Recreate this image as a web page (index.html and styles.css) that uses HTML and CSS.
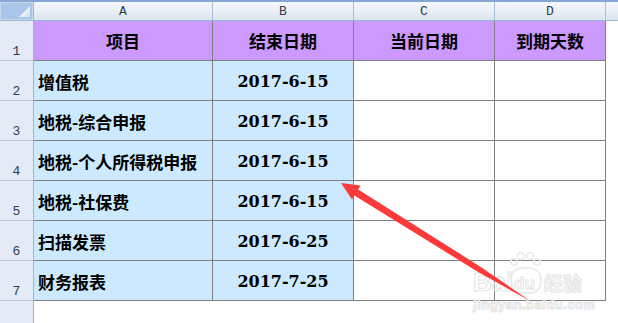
FILE: index.html
```html
<!DOCTYPE html>
<html lang="zh-CN">
<head>
<meta charset="utf-8">
<title>到期天数</title>
<link rel="stylesheet" href="styles.css">
</head>
<body>
<div class="page">
  <div class="sheet">
    <div class="corner"><span class="corner-tri"></span></div>
    <div class="colhead">A</div>
    <div class="colhead">B</div>
    <div class="colhead">C</div>
    <div class="colhead">D</div>
    <div class="colhead colhead-rest"></div>

    <div class="rowhead">1</div>
    <div class="cell title">项目</div>
    <div class="cell title">结束日期</div>
    <div class="cell title">当前日期</div>
    <div class="cell title">到期天数</div>
    <div class="cell empty"></div>

    <div class="rowhead">2</div>
    <div class="cell item">增值税</div>
    <div class="cell date">2017-6-15</div>
    <div class="cell"></div>
    <div class="cell"></div>
    <div class="cell empty"></div>

    <div class="rowhead">3</div>
    <div class="cell item">地税-综合申报</div>
    <div class="cell date">2017-6-15</div>
    <div class="cell"></div>
    <div class="cell"></div>
    <div class="cell empty"></div>

    <div class="rowhead">4</div>
    <div class="cell item">地税-个人所得税申报</div>
    <div class="cell date">2017-6-15</div>
    <div class="cell"></div>
    <div class="cell"></div>
    <div class="cell empty"></div>

    <div class="rowhead">5</div>
    <div class="cell item">地税-社保费</div>
    <div class="cell date">2017-6-15</div>
    <div class="cell"></div>
    <div class="cell"></div>
    <div class="cell empty"></div>

    <div class="rowhead">6</div>
    <div class="cell item">扫描发票</div>
    <div class="cell date">2017-6-25</div>
    <div class="cell"></div>
    <div class="cell"></div>
    <div class="cell empty"></div>

    <div class="rowhead">7</div>
    <div class="cell item">财务报表</div>
    <div class="cell date">2017-7-25</div>
    <div class="cell"></div>
    <div class="cell"></div>
    <div class="cell empty"></div>

    <div class="rowhead rowhead-last"></div>
    <div class="cell empty"></div>
    <div class="cell empty"></div>
    <div class="cell empty"></div>
    <div class="cell empty"></div>
    <div class="cell empty"></div>
  </div>

  <svg class="overlay" width="618" height="323" viewBox="0 0 618 323" xmlns="http://www.w3.org/2000/svg">
    <g class="watermark">
      <circle cx="514" cy="262" r="3.2"/>
      <circle cx="521" cy="256" r="3.4"/>
      <circle cx="530" cy="256" r="3.4"/>
      <circle cx="537" cy="262" r="3.2"/>
      <rect x="511" y="268" width="30" height="25" rx="11"/>
      <text x="473" y="291" class="wm-big">Bai</text>
      <text x="514" y="289" class="wm-du">du</text>
      <text x="544" y="291" class="wm-cn">经验</text>
      <text x="473" y="309" class="wm-small">jingyan.baidu.com</text>
    </g>
    <polygon class="arrow" points="341,183 360.5,185.5 358.2,189.5 481.5,267.4 530.5,301.3 478.5,272.2 354.4,195.5 352,199.5"/>
  </svg>
</div>
</body>
</html>
```

FILE: styles.css
```css
html, body {
  margin: 0;
  padding: 0;
  background: #ffffff;
}

.page {
  position: relative;
  width: 618px;
  height: 323px;
  overflow: hidden;
}

.sheet {
  display: grid;
  grid-template-columns: 34px 179px 141px 141px 111px 1fr;
  grid-template-rows: 19px repeat(7, 40px) 1fr;
  width: 618px;
  height: 323px;
  box-sizing: border-box;
  border-top: 2px solid #86a7d4;
  background: #ffffff;
}

.corner {
  position: relative;
  background: #a9c5ea;
  border-right: 1px solid #9eb6d2;
  border-bottom: 1px solid #9eb6d2;
  box-shadow: inset 0 0 0 1px #c9d9ef;
}

.corner-tri {
  position: absolute;
  right: 3px;
  bottom: 3px;
  width: 11px;
  height: 11px;
  background: linear-gradient(135deg, #ffffff 0%, #e9eef5 60%, #d2dcea 100%);
  clip-path: polygon(100% 0, 100% 100%, 0 100%);
}

.colhead {
  display: flex;
  align-items: center;
  justify-content: center;
  padding-top: 1px;
  background: linear-gradient(#f6f8fb 0%, #eaeff5 50%, #dbe3ec 100%);
  border-right: 1px solid #a9bfd8;
  border-bottom: 1px solid #9cb6d4;
  font-family: "Liberation Mono", "DejaVu Sans Mono", monospace;
  font-size: 13px;
  color: #2b3d52;
}

.colhead-rest {
  border-right: none;
}

.rowhead {
  display: flex;
  align-items: flex-end;
  justify-content: center;
  padding-bottom: 2px;
  box-sizing: border-box;
  background: #e4ebf6;
  border-right: 1px solid #9eb6d2;
  border-bottom: 1px solid #b3c5db;
  font-family: "Liberation Mono", "DejaVu Sans Mono", monospace;
  font-size: 13px;
  line-height: 1;
  color: #2b3d52;
}

.rowhead-last {
  border-bottom: none;
}

.cell {
  display: flex;
  align-items: center;
  box-sizing: border-box;
  border-right: 1px solid #808080;
  border-bottom: 1px solid #808080;
  background: #ffffff;
  color: #000000;
  line-height: 1;
}

.cell.empty {
  border: none;
}

.title {
  justify-content: center;
  padding-top: 0;
  background: #cc99ff;
  font-family: "Noto Sans CJK SC", sans-serif;
  font-weight: 700;
  font-size: 17px;
}

.item {
  padding-left: 4px;
  padding-top: 1px;
  background: #cce9fe;
  font-family: "Noto Sans CJK SC", sans-serif;
  font-weight: 700;
  font-size: 17px;
}

.date {
  justify-content: center;
  padding-top: 2px;
  background: #cce9fe;
  font-family: "DejaVu Serif", "Liberation Serif", serif;
  font-weight: 700;
  font-size: 16px;
}

.overlay {
  position: absolute;
  left: 0;
  top: 0;
  pointer-events: none;
}

.arrow {
  fill: #fc3a3a;
}

.watermark circle,
.watermark rect {
  fill: none;
  stroke: #e8e8e8;
  stroke-width: 1.5;
}

.watermark text {
  fill: rgba(255, 255, 255, 0.4);
  stroke: #e4e4e4;
  stroke-width: 1;
  font-family: "Liberation Sans", "Noto Sans CJK SC", sans-serif;
}

.wm-big {
  font-size: 26px;
  font-weight: 700;
}

.wm-du {
  font-size: 17px;
  font-weight: 700;
}

.wm-cn {
  font-family: "Noto Sans CJK SC", sans-serif;
  font-size: 19px;
  font-weight: 700;
}

.wm-small {
  font-size: 13px;
  font-weight: 700;
  letter-spacing: 0.5px;
}
```
